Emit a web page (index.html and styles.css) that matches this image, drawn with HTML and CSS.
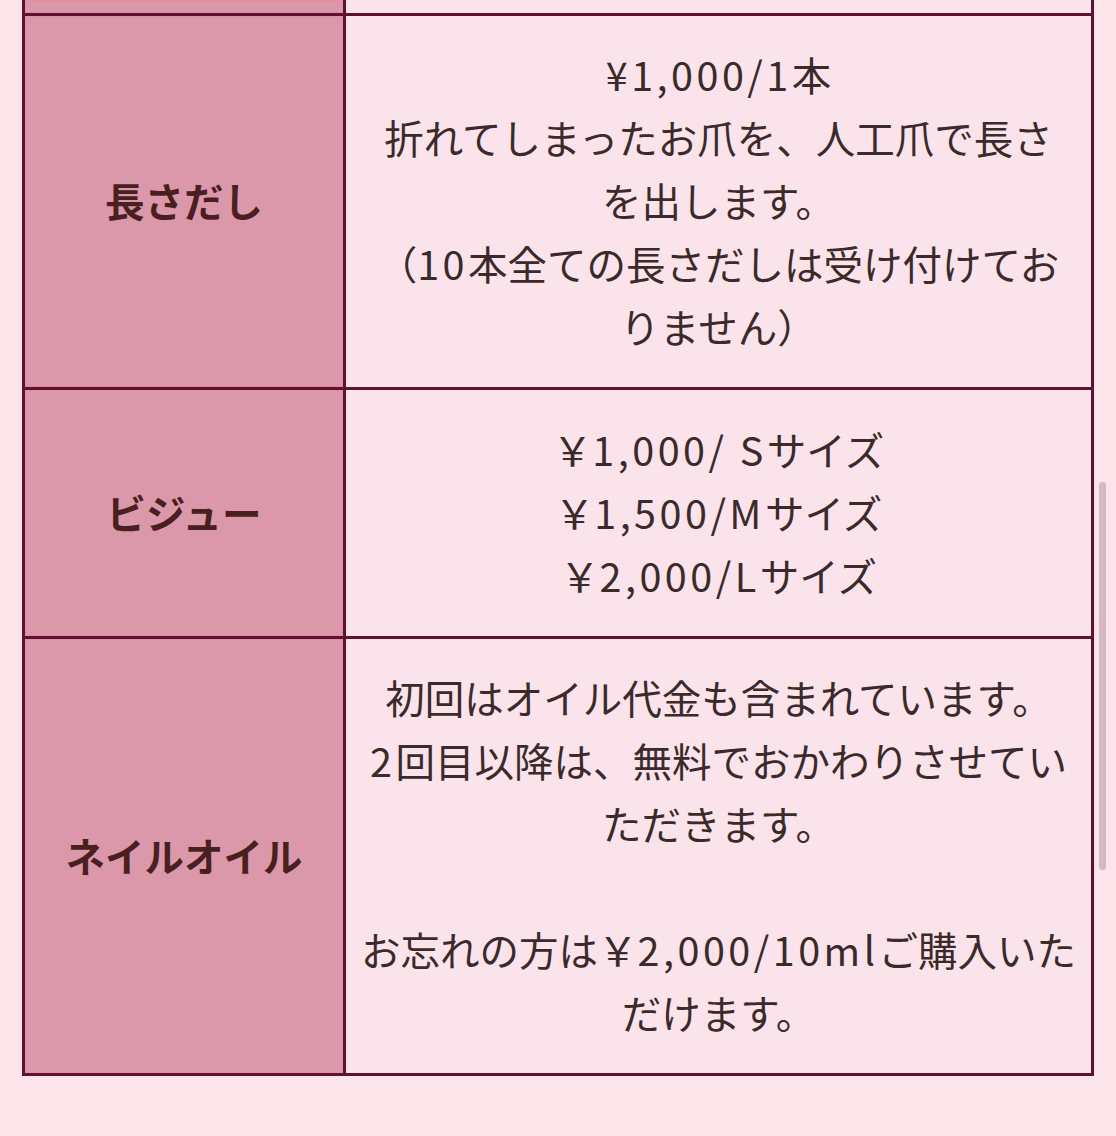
FILE: index.html
```html
<!DOCTYPE html>
<html lang="ja">
<head>
<meta charset="utf-8">
<title>メニュー</title>
<link rel="stylesheet" href="styles.css">
</head>
<body>
<div class="page">
  <div class="table">
    <div class="cell label partial"></div>
    <div class="cell value partial"></div>

    <div class="cell label row1"><p class="text">長さだし</p></div>
    <div class="cell value row1"><p class="text"><span class="lat">¥1,000/1</span>本<br>折れてしまったお爪を、人工爪で長さ<br>を出します。<br>（<span class="lat">10</span>本全ての長さだしは受け付けてお<br>りません）</p></div>

    <div class="cell label row2"><p class="text">ビジュー</p></div>
    <div class="cell value row2"><p class="text">￥<span class="lat">1,000/ S</span>サイズ<br>￥<span class="lat">1,500/M</span>サイズ<br>￥<span class="lat">2,000/L</span>サイズ</p></div>

    <div class="cell label row3 last"><p class="text">ネイルオイル</p></div>
    <div class="cell value row3 last"><p class="text">初回はオイル代金も含まれています。<br><span class="lat">2</span>回目以降は、無料でおかわりさせてい<br>ただきます。<br><br>お忘れの方は￥<span class="lat">2,000/10ml</span>ご購入いた<br>だけます。</p></div>
  </div>
  <div class="scrollbar"></div>
</div>
</body>
</html>
```

FILE: styles.css
```css
html, body {
  margin: 0;
  padding: 0;
  background: #fbe4ea;
}
body {
  width: 1116px;
  height: 1136px;
  overflow: hidden;
  font-family: "Noto Sans CJK JP", "Noto Sans", sans-serif;
}
.page {
  position: relative;
  width: 1116px;
  height: 1136px;
  padding: 0 22px;
  box-sizing: border-box;
}
.table {
  display: grid;
  grid-template-columns: 321px 745px;
  border: 3px solid #5e1231;
  border-top: none;
}
.cell {
  display: flex;
  align-items: center;
  justify-content: center;
  text-align: center;
  box-sizing: border-box;
  padding-bottom: 4px;
  border-bottom: 3px solid #5e1231;
  font-size: 39.5px;
  line-height: 63px;
  white-space: nowrap;
}
.text {
  margin: 0;
}
.cell.last {
  border-bottom: none;
}
.label {
  background: #dc98ab;
  border-right: 3px solid #5e1231;
  box-shadow: inset 0 0 0 1px rgba(238, 128, 160, 0.55);
  color: #4a1f20;
  font-weight: 700;
}
.value {
  background: #fae3ea;
  color: #3b2a2a;
}
.lat {
  letter-spacing: 3.5px;
}
.partial {
  height: 16px;
  padding: 0;
}
.row1 {
  height: 374px;
}
.row2 {
  height: 249px;
}
.row3 {
  height: 434px;
}
.scrollbar {
  position: absolute;
  left: 1099px;
  top: 482px;
  width: 7px;
  height: 388px;
  border-radius: 4px;
  background: #d6b8c3;
}
```
